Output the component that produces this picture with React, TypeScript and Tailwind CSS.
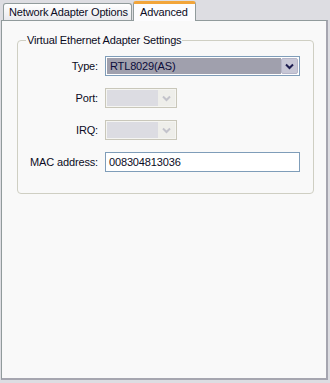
const Chevron = ({ color }: { color: string }) => (
    <svg width="9" height="7" viewBox="0 0 9 7" fill="none">
        <path d="M1 1.5 L4.5 5 L8 1.5" stroke={color} strokeWidth="2" />
    </svg>
);

interface Row {
    label: string;
    kind: "select" | "disabled" | "input";
    value?: string;
}

const rows: Row[] = [
    { label: "Type:", kind: "select", value: "RTL8029(AS)" },
    { label: "Port:", kind: "disabled" },
    { label: "IRQ:", kind: "disabled" },
    { label: "MAC address:", kind: "input", value: "008304813036" },
];

const App = () => {
    return (
        <div
            className="w-[330px] h-[383px] bg-[#dddde2] text-[11px] tracking-[-0.15px] text-[#0b0b24] overflow-hidden"
            style={{ fontFamily: '"Liberation Sans", Arial, sans-serif' }}
        >
            {/* Tabs */}
            <div className="flex items-end h-[20px] pl-[3px]">
                <div className="h-[17px] w-[129px] border border-b-0 border-[#919b9c] rounded-t-[3px] bg-gradient-to-b from-white to-[#e9e9ee] flex items-center pl-[5px] leading-none whitespace-nowrap">
                    Network Adapter Options
                </div>
                <div className="h-[20px] w-[63px] ml-[1px] -mb-[1px] relative z-10 border border-b-0 border-[#919b9c] border-t-[3px] border-t-[#f2a53a] rounded-t-[3px] bg-[#fcfcfe] flex items-center pl-[6px] leading-none whitespace-nowrap">
                    Advanced
                </div>
            </div>

            {/* Panel */}
            <div className="ml-[1px] w-[327px] h-[360px] border border-[#919b9c] border-r-[2px] border-r-[#a6a6b0] border-b-[2px] border-b-[#a6a6b0] bg-[#f9f9f9] pt-[14px] pl-[15px]">
                <fieldset className="w-[297px] h-[159px] border border-[#cfcfc3] rounded-[4px] pl-[8px]">
                    <legend className="px-[1px] leading-none">Virtual Ethernet Adapter Settings</legend>
                    <div className="grid grid-cols-[72px_1fr] gap-x-[7px] gap-y-[12px] mt-[10px]">
                        {rows.map((row) => (
                            <div key={row.label} className="contents">
                                <div className="h-[20px] flex items-center justify-end whitespace-nowrap">
                                    {row.label}
                                </div>
                                {row.kind === "select" && (
                                    <div className="w-[195px] h-[20px] border border-[#7f9db9] bg-white flex p-[1px]">
                                        <div className="flex-1 bg-[#a0a0ad] flex items-center pl-[3px] text-[#0b0b3a]">
                                            {row.value}
                                        </div>
                                        <div className="w-[17px] bg-[#c7c7d6] border border-[#b5b5c8] rounded-[2px] flex items-center justify-center">
                                            <Chevron color="#1c1c50" />
                                        </div>
                                    </div>
                                )}
                                {row.kind === "disabled" && (
                                    <div className="w-[72px] h-[20px] border border-[#c9c7ba] bg-[#f5f5f2] flex p-[1px]">
                                        <div className="flex-1 bg-[#dcdce2]" />
                                        <div className="w-[17px] bg-[#eeeeea] flex items-center justify-center">
                                            <Chevron color="#c3c3cb" />
                                        </div>
                                    </div>
                                )}
                                {row.kind === "input" && (
                                    <div className="w-[195px] h-[20px] border border-[#7f9db9] bg-white flex items-center pl-[3px]">
                                        {row.value}
                                    </div>
                                )}
                            </div>
                        ))}
                    </div>
                </fieldset>
            </div>
        </div>
    );
};

export default App;
